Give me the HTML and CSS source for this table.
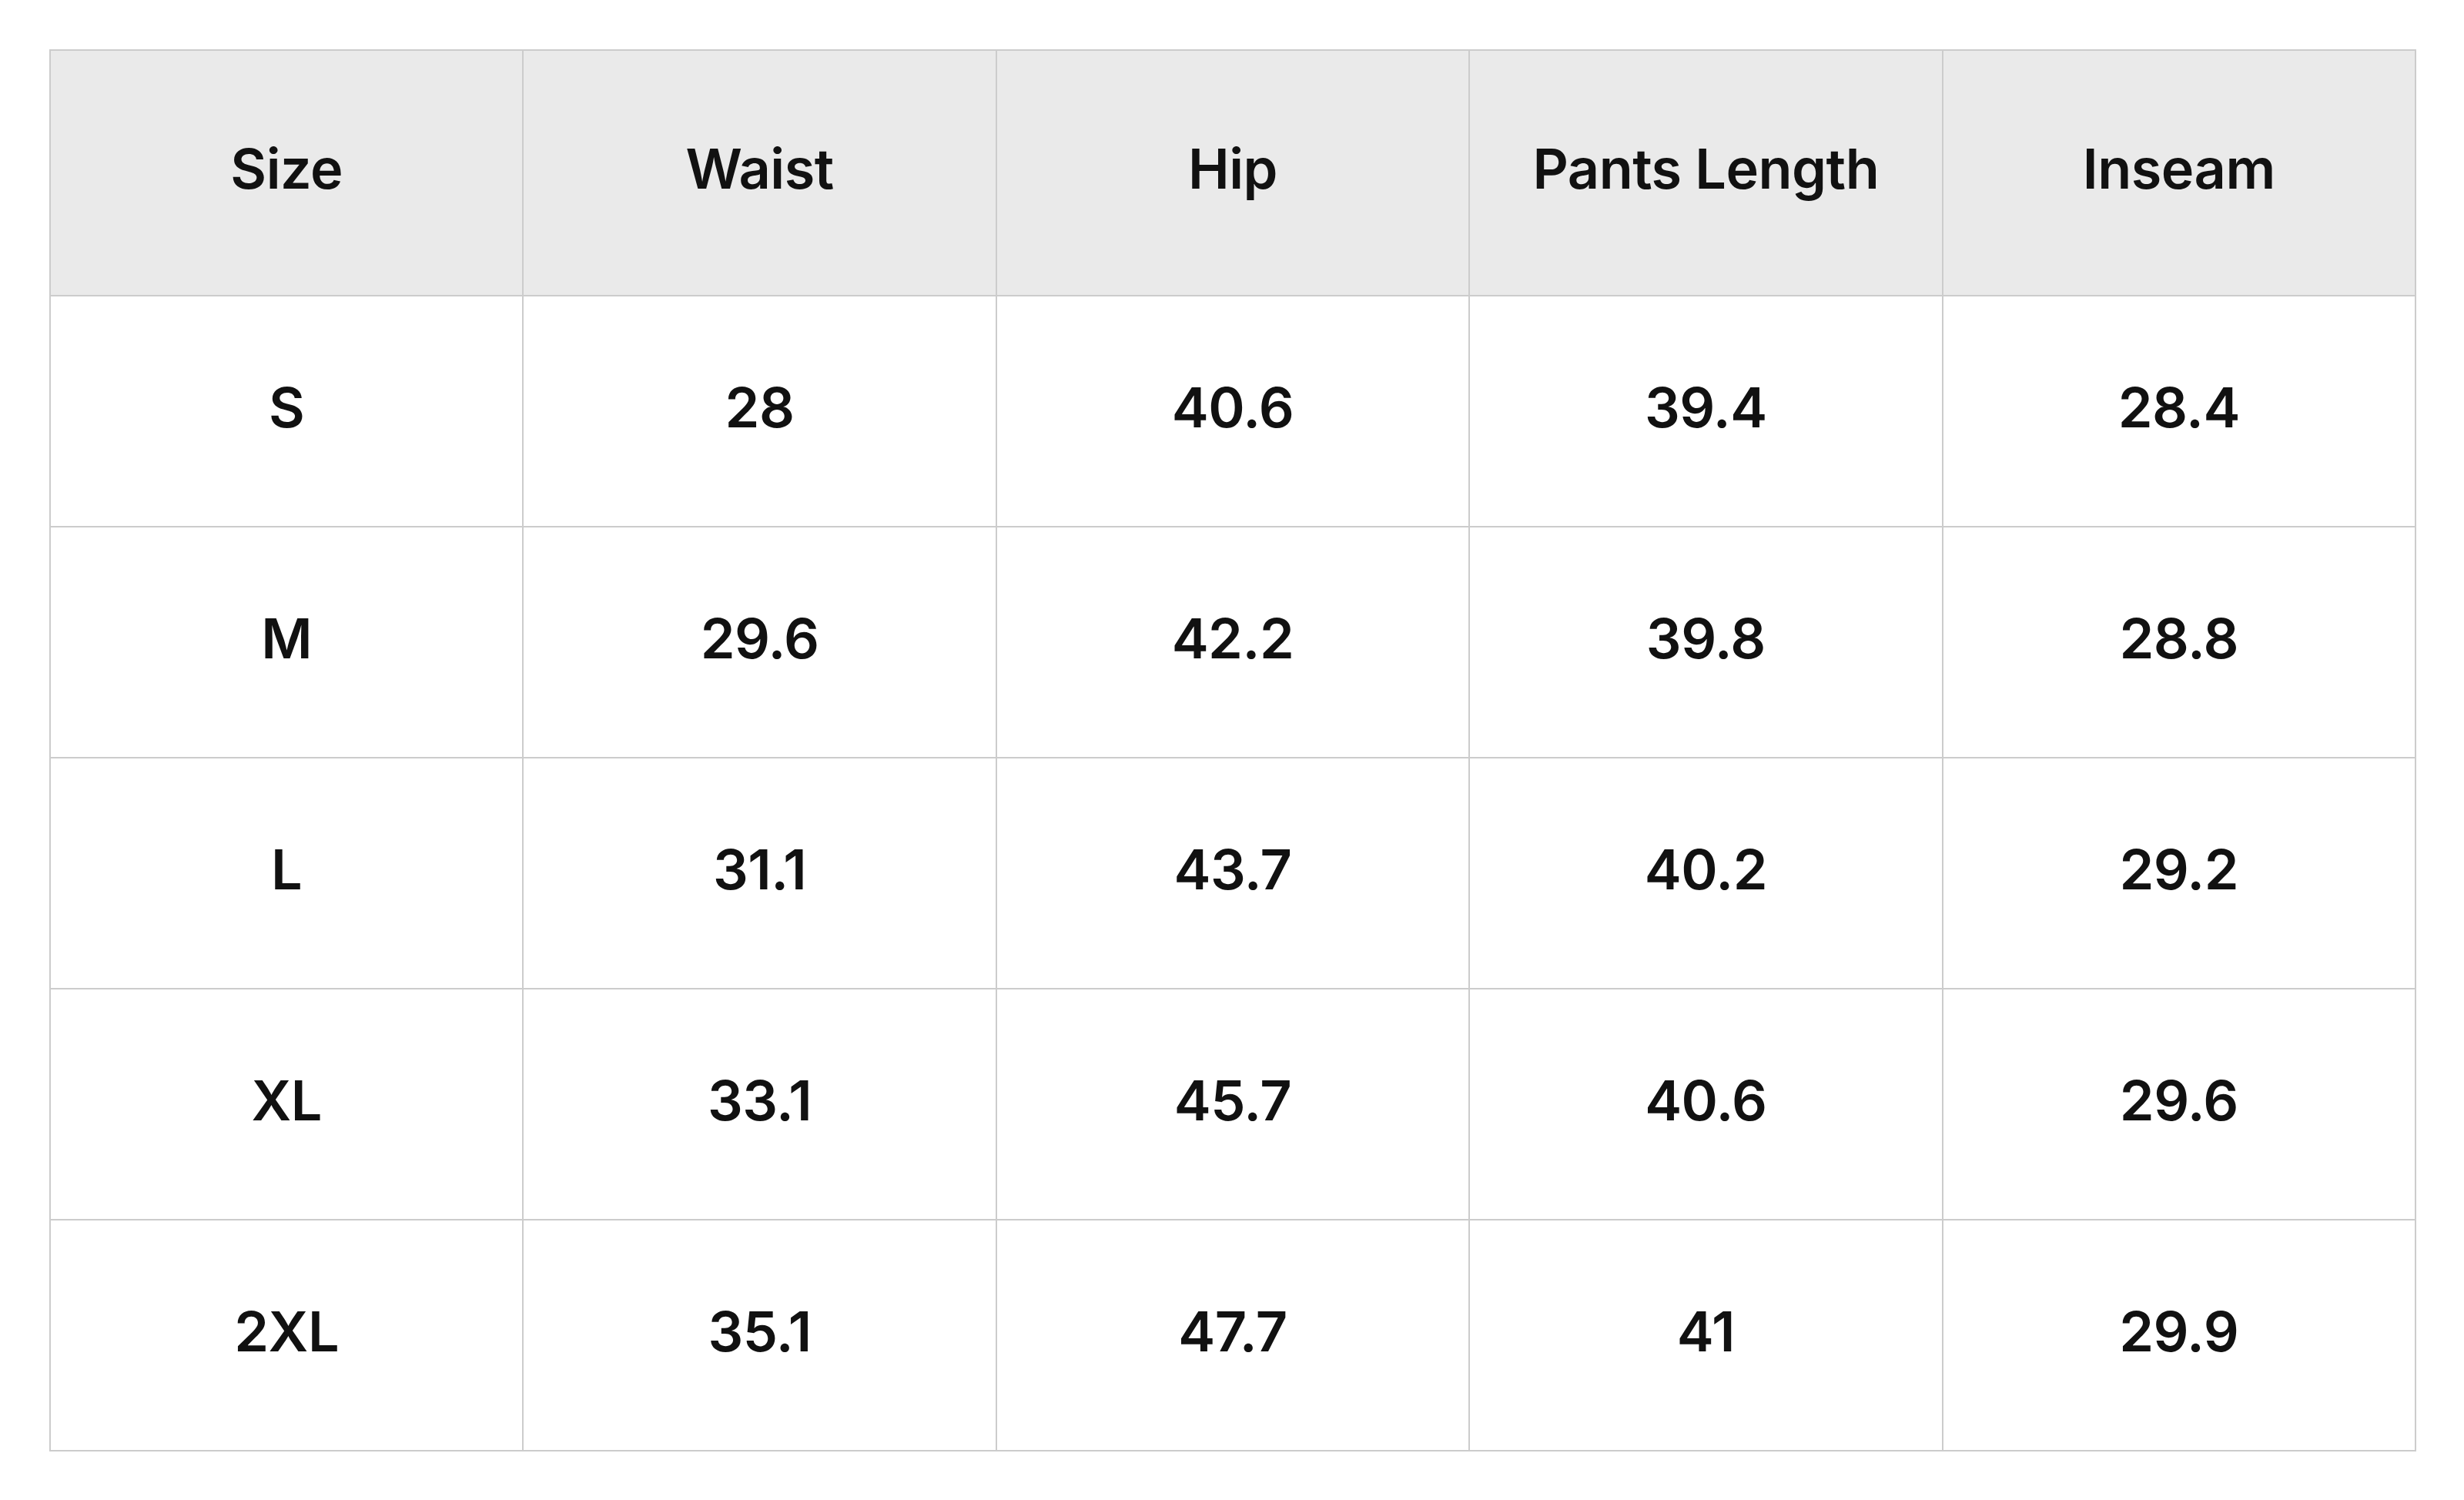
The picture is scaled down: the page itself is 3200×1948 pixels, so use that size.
FILE: index.html
```html
<!DOCTYPE html>
<html>
<head>
<meta charset="utf-8">
<link rel="stylesheet" href="styles.css">
</head>
<body>
<table class="size-table">
  <thead>
    <tr><th>Size</th><th>Waist</th><th>Hip</th><th>Pants Length</th><th>Inseam</th></tr>
  </thead>
  <tbody>
    <tr><td>S</td><td>28</td><td>40.6</td><td>39.4</td><td>28.4</td></tr>
    <tr><td>M</td><td>29.6</td><td>42.2</td><td>39.8</td><td>28.8</td></tr>
    <tr><td>L</td><td>31.1</td><td>43.7</td><td>40.2</td><td>29.2</td></tr>
    <tr><td>XL</td><td>33.1</td><td>45.7</td><td>40.6</td><td>29.6</td></tr>
    <tr><td>2XL</td><td>35.1</td><td>47.7</td><td>41</td><td>29.9</td></tr>
  </tbody>
</table>
</body>
</html>
```
FILE: styles.css
```css
html, body {
  margin: 0;
  padding: 0;
  background: #ffffff;
}
body {
  padding: 64px 0 0 64px;
  font-family: Inter, "Liberation Sans", sans-serif;
  color: #111111;
}
.size-table {
  border-collapse: collapse;
  table-layout: fixed;
  width: 3074px;
}
.size-table th,
.size-table td {
  box-sizing: border-box;
  border: 2px solid #cccccc;
  text-align: center;
  vertical-align: middle;
  font-size: 72px;
  font-weight: 600;
  letter-spacing: -0.5px;
  padding: 0 0 12px 0;
}
.size-table th {
  background: #eaeaea;
  height: 319px;
}
.size-table td {
  height: 300px;
}
```
